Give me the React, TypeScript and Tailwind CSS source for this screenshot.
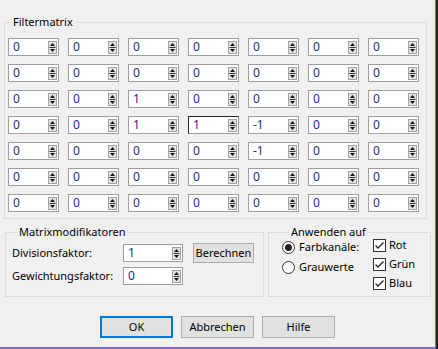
import React from "react";
import clsx from "clsx";

const matrix = [
  ["0", "0", "0", "0", "0", "0", "0"],
  ["0", "0", "0", "0", "0", "0", "0"],
  ["0", "0", "1", "0", "0", "0", "0"],
  ["0", "0", "1", "1", "-1", "0", "0"],
  ["0", "0", "0", "0", "-1", "0", "0"],
  ["0", "0", "0", "0", "0", "0", "0"],
  ["0", "0", "0", "0", "0", "0", "0"],
];

const Spin: React.FC = () => (
  <svg width="9" height="13" viewBox="0 0 9 13" className="shrink-0">
    <rect x="0.5" y="0.5" width="8" height="12" fill="#e3e3e3" stroke="#a3a3a3" />
    <path d="M4.5 2 L7 5 H2 Z" fill="#111" />
    <path d="M1.5 6.5 H7.5" stroke="#333" />
    <path d="M2 8 H7 L4.5 11 Z" fill="#111" />
  </svg>
);

const NumField: React.FC<{ value: string; focus?: boolean; className?: string }> = ({
  value,
  focus,
  className,
}) => (
  <div
    className={clsx(
      "flex h-[18px] items-center justify-between border bg-white pl-[4px] pr-[1px]",
      focus ? "border-[#9a9a9a] border-t-[#2a2a2a] border-l-[#2a2a2a]" : "border-[#9f9f9f]",
      className
    )}
  >
    <span className="text-[12px] leading-none text-[#1b2f86]">{value}</span>
    <Spin />
  </div>
);

const Button: React.FC<{ label: string; primary?: boolean; className?: string }> = ({
  label,
  primary,
  className,
}) => (
  <button
    type="button"
    className={clsx(
      "flex items-center justify-center bg-[#e1e1e1] text-[11px] text-black",
      primary ? "border-2 border-[#0078d7]" : "border border-[#adadad]",
      className
    )}
  >
    {label}
  </button>
);

const Radio: React.FC<{ checked?: boolean }> = ({ checked }) => (
  <span className="flex h-[13px] w-[13px] shrink-0 items-center justify-center rounded-full border border-[#333] bg-white">
    {checked && <span className="h-[7px] w-[7px] rounded-full bg-[#222]" />}
  </span>
);

const Check: React.FC = () => (
  <span className="flex h-[13px] w-[13px] shrink-0 items-center justify-center border border-[#333] bg-white">
    <svg width="11" height="11" viewBox="0 0 11 11">
      <path d="M1.5 5.5 L4 8 L9.5 2.5" fill="none" stroke="#222" strokeWidth="1.3" />
    </svg>
  </span>
);

const App: React.FC = () => {
  return (
    <div className="flex h-[349px] w-[438px] bg-[#262626] font-['Noto_Sans',sans-serif] text-[11px] text-black">
      <div className="flex h-[349px] w-[435px] flex-col border-b-2 border-[#7f6acb] bg-[#f0f0f0]">
        {/* Filtermatrix */}
        <fieldset className="ml-[4px] mt-[14px] w-[423px] border border-[#dcdcdc] pb-[6px] pl-[3px]">
          <legend className="ml-[3px] px-[2px] leading-[16px]">Filtermatrix</legend>
          <div className="grid grid-cols-[repeat(7,51px)] gap-x-[9px] gap-y-[8px] pt-[8px]">
            {matrix.map((row, r) =>
              row.map((v, c) => (
                <NumField key={`${r}-${c}`} value={v} focus={r === 3 && c === 3} />
              ))
            )}
          </div>
        </fieldset>

        <div className="ml-[5px] mt-[5px] flex gap-[4px]">
          {/* Matrixmodifikatoren */}
          <fieldset className="h-[73px] w-[259px] border border-[#dcdcdc] pl-[6px]">
            <legend className="ml-[5px] px-[2px] leading-[16px]">Matrixmodifikatoren</legend>
            <div className="flex items-start pt-[4px]">
              <div className="grid grid-cols-[111px_60px] items-center gap-y-[5px]">
                <span className="whitespace-nowrap">Divisionsfaktor:</span>
                <NumField value="1" />
                <span className="whitespace-nowrap">Gewichtungsfaktor:</span>
                <NumField value="0" />
              </div>
              <Button label="Berechnen" className="-mt-[1px] ml-[10px] h-[20px] w-[61px]" />
            </div>
          </fieldset>

          {/* Anwenden auf */}
          <fieldset className="h-[73px] w-[163px] border border-[#dcdcdc] pl-[13px]">
            <legend className="ml-[7px] px-[2px] leading-[16px]">Anwenden auf</legend>
            <div className="-mt-[4px] flex">
              <div className="flex w-[91px] flex-col pt-[1px]">
                <label className="flex h-[20px] items-center gap-[4px] whitespace-nowrap">
                  <Radio checked />
                  <span>Farbkanäle:</span>
                </label>
                <label className="flex h-[20px] items-center gap-[4px] whitespace-nowrap">
                  <Radio />
                  <span>Grauwerte</span>
                </label>
              </div>
              <div className="flex flex-col">
                {["Rot", "Grün", "Blau"].map((c) => (
                  <label key={c} className="flex h-[19px] items-center gap-[3px]">
                    <Check />
                    <span>{c}</span>
                  </label>
                ))}
              </div>
            </div>
          </fieldset>
        </div>

        <div className="ml-[100px] mt-[19px] flex gap-[8px]">
          <Button label="OK" primary className="h-[22px] w-[73px]" />
          <Button label="Abbrechen" className="h-[22px] w-[73px]" />
          <Button label="Hilfe" className="h-[22px] w-[73px]" />
        </div>
      </div>
      <div className="w-px bg-[#7f6acb]" />
    </div>
  );
};

export default App;
